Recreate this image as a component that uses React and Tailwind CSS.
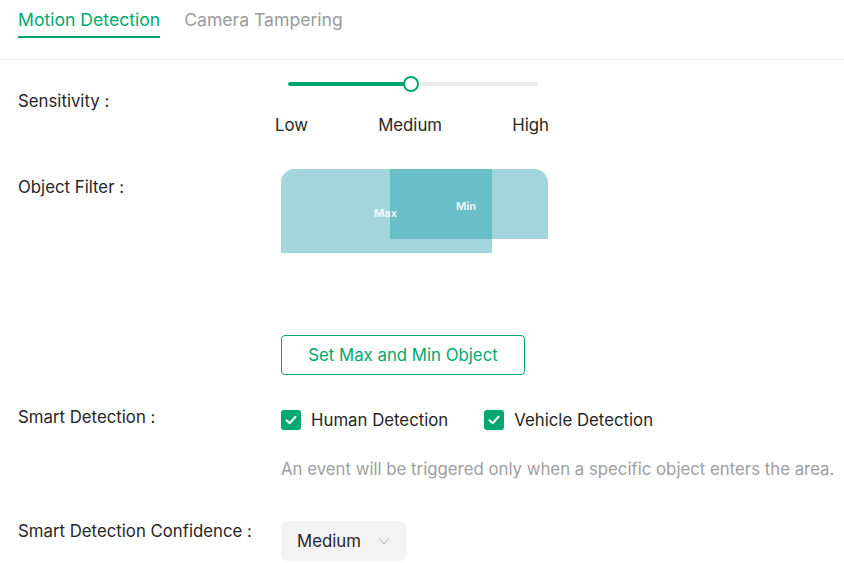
import React from "react";

const Check = () => (
  <span className="w-5 h-5 rounded-[3px] bg-[#00a870] flex items-center justify-center">
    <svg width="12" height="10" viewBox="0 0 12 10" fill="none">
      <path d="M1.5 5.2 4.6 8.2 10.5 1.8" stroke="white" strokeWidth="2" strokeLinecap="round" strokeLinejoin="round" />
    </svg>
  </span>
);

const ObjectFilter = () => (
  <svg width="267" height="84" viewBox="0 0 267 84">
    <path d="M0 14 A14 14 0 0 1 14 0 H253 A14 14 0 0 1 267 14 V70 H0 Z" fill="#a3d6dc" />
    <path d="M0 14 A14 14 0 0 1 14 0 H211 V84 H0 Z" fill="#a3d6dc" />
    <rect x="109" y="0" width="102" height="70" fill="#69bfc7" />
    <text x="93" y="48" fontSize="11" fontWeight="700" fill="#ffffff" fillOpacity="0.85" fontFamily="Inter, sans-serif">Max</text>
    <text x="175" y="41" fontSize="11" fontWeight="700" fill="#ffffff" fillOpacity="0.85" fontFamily="Inter, sans-serif">Min</text>
  </svg>
);

export default function App() {
  return (
    <div className="w-[844px] h-[563px] bg-white overflow-hidden text-[#262626] text-[16.8px]" style={{ fontFamily: "Inter, 'Noto Sans', sans-serif" }}>
      {/* Tabs */}
      <div className="h-[60px] border-b border-[#ebebeb] flex gap-6 pl-[18px]">
        <div className="pt-2 pb-1 border-b-2 border-[#00a870] h-[38px] text-[17.6px] leading-6 text-[#00a870]">Motion Detection</div>
        <div className="pt-2 pb-1 h-[38px] text-[17.6px] leading-6 text-[#9a9a9a]">Camera Tampering</div>
      </div>

      <div className="pl-[18px]">
        {/* Sensitivity */}
        <div className="flex mt-[14px]">
          <div className="w-[263px] mt-[15px] leading-6">Sensitivity :</div>
          <div>
            <div className="relative h-5 w-[250px] ml-[7px]">
              <div className="absolute left-0 right-0 top-[8px] h-1 rounded-full bg-[#ebebeb]" />
              <div className="absolute left-0 w-[123px] top-[8px] h-1 rounded-full bg-[#00a870]" />
              <div className="absolute left-[115px] top-[2px] w-4 h-4 rounded-full bg-white border-2 border-[#00a870]" />
            </div>
            <div className="flex justify-between w-[274px] -ml-[6px] mt-[19px] leading-6">
              <span>Low</span>
              <span>Medium</span>
              <span>High</span>
            </div>
          </div>
        </div>

        {/* Object filter */}
        <div className="flex mt-8">
          <div className="w-[263px] mt-[6px] leading-6">Object Filter :</div>
          <div>
            <ObjectFilter />
            <button className="mt-[82px] h-10 w-[244px] rounded border border-[#00a870] text-[#00a870] leading-6">
              Set Max and Min Object
            </button>
          </div>
        </div>

        {/* Smart detection */}
        <div className="flex mt-[30px]">
          <div className="w-[263px] leading-6">Smart Detection :</div>
          <div>
            <div className="mt-[3px] h-6 flex items-center">
              <Check />
              <span className="ml-[10px] leading-6">Human Detection</span>
              <span className="ml-9"><Check /></span>
              <span className="ml-[10px] leading-6">Vehicle Detection</span>
            </div>
            <div className="mt-[25px] leading-6 text-[#9e9e9e] whitespace-nowrap">
              An event will be triggered only when a specific object enters the area.
            </div>
          </div>
        </div>

        {/* Confidence */}
        <div className="flex mt-[38px]">
          <div className="w-[263px] leading-6">Smart Detection Confidence :</div>
          <div className="mt-[2px] h-10 w-[125px] rounded-md bg-[#f3f3f3] flex items-center justify-between pl-4 pr-4">
            <span className="leading-6">Medium</span>
            <svg width="12" height="8" viewBox="0 0 12 8" fill="none">
              <path d="M1 1 6 7 11 1" stroke="#b3b3b3" strokeWidth="1" />
            </svg>
          </div>
        </div>
      </div>
    </div>
  );
}
